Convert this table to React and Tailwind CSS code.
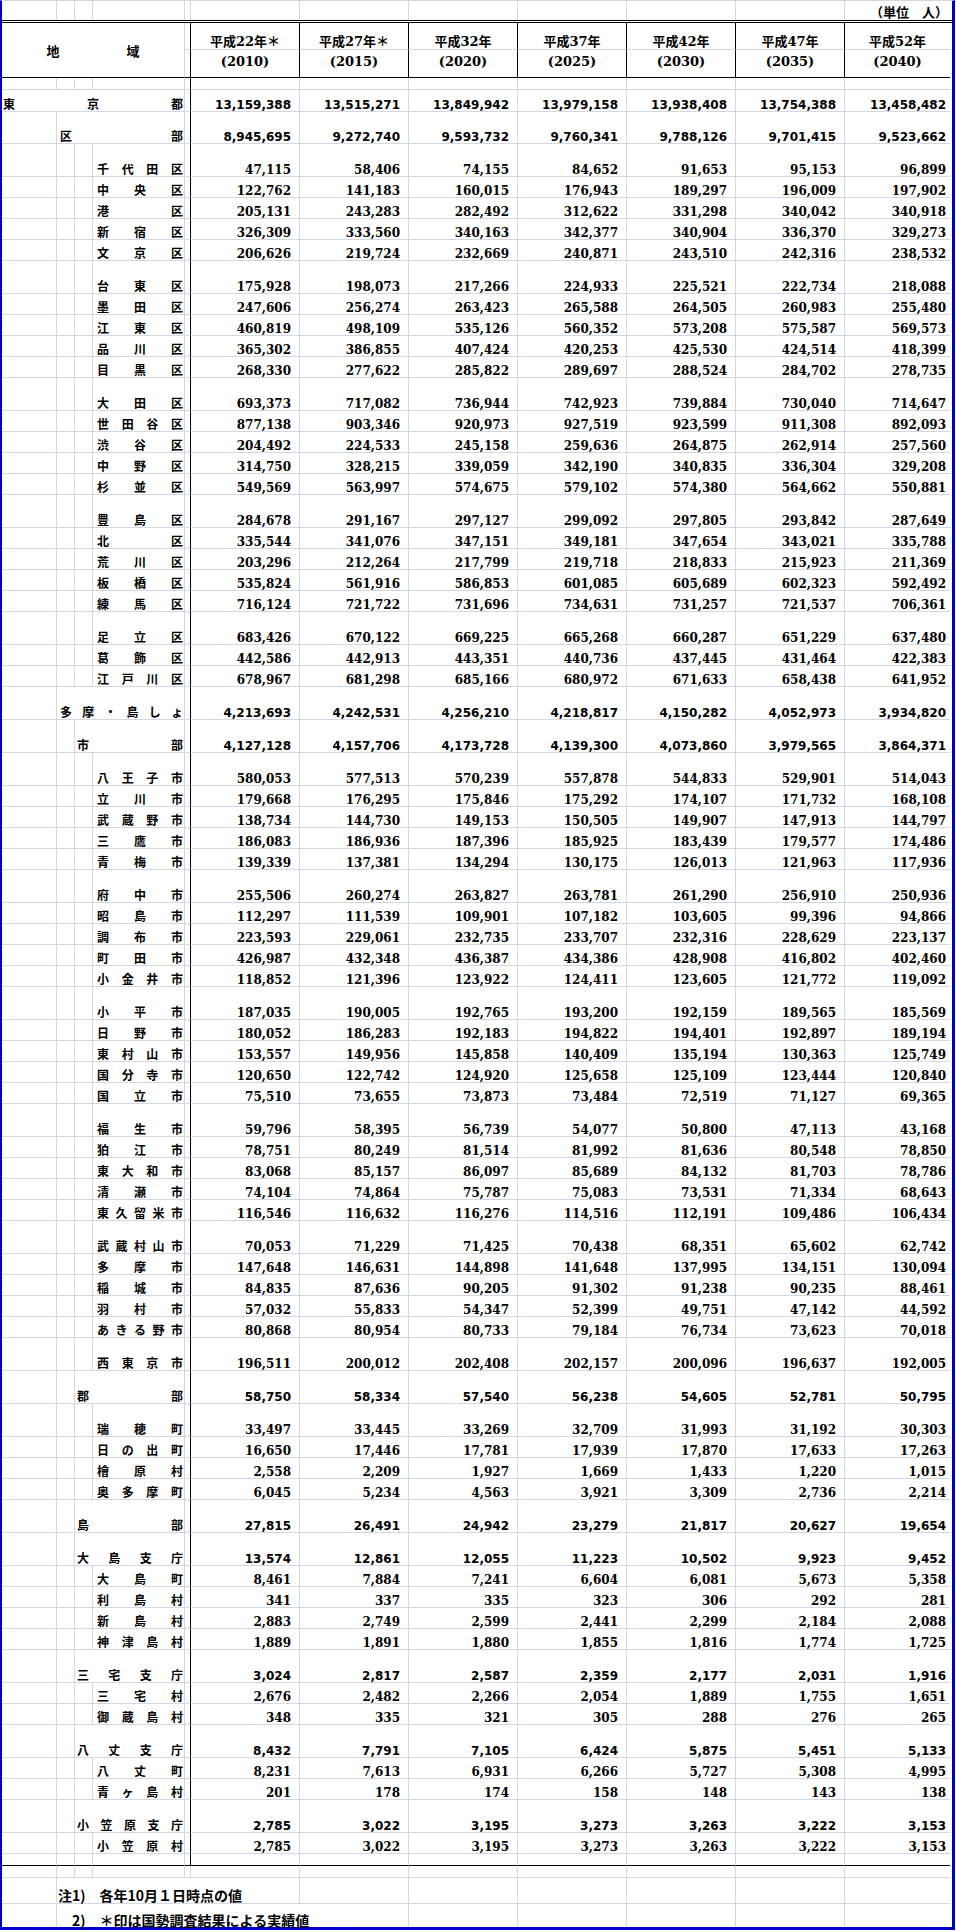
import React from 'react';

const COLS = 'grid-cols-[55px_18px_18px_92px_6px_109px_109px_109px_109px_109px_109px_105px]';
const GR = 'border-r border-r-[#d0d7e5]';
const GB = 'border-b border-b-[#d0d7e5]';
const JP = "font-['Noto_Sans_CJK_JP',sans-serif]";
const SERIF = "font-['DejaVu_Serif','Noto_Sans_CJK_JP',serif]";
const SANS = "font-['DejaVu_Sans','Noto_Sans_CJK_JP',sans-serif]";

const H = { 12: 'h-[12px]', 21: 'h-[21px]', 22: 'h-[22px]', 32: 'h-[32px]', 33: 'h-[33px]' };
const SPAN = ['col-span-4', 'col-span-3', 'col-span-2', 'col-span-1'];
const PL = ['pl-[1px]', 'pl-[3px]', 'pl-[2px]', 'pl-[4px]'];

const years = [
  ['平成22年＊', '(2010)'],
  ['平成27年＊', '(2015)'],
  ['平成32年', '(2020)'],
  ['平成37年', '(2025)'],
  ['平成42年', '(2030)'],
  ['平成47年', '(2035)'],
  ['平成52年', '(2040)'],
];

// level: 0 = 東京都, 1 = 区部/多摩, 2 = 市部/支庁, 3 = 区市町村
const data = [
  [0, '東京都', 22, 1, '13,159,388 13,515,271 13,849,942 13,979,158 13,938,408 13,754,388 13,458,482'],
  [1, '区部', 32, 1, '8,945,695 9,272,740 9,593,732 9,760,341 9,788,126 9,701,415 9,523,662'],
  [3, '千代田区', 33, 0, '47,115 58,406 74,155 84,652 91,653 95,153 96,899'],
  [3, '中央区', 21, 0, '122,762 141,183 160,015 176,943 189,297 196,009 197,902'],
  [3, '港区', 21, 0, '205,131 243,283 282,492 312,622 331,298 340,042 340,918'],
  [3, '新宿区', 21, 0, '326,309 333,560 340,163 342,377 340,904 336,370 329,273'],
  [3, '文京区', 21, 0, '206,626 219,724 232,669 240,871 243,510 242,316 238,532'],
  [3, '台東区', 33, 0, '175,928 198,073 217,266 224,933 225,521 222,734 218,088'],
  [3, '墨田区', 21, 0, '247,606 256,274 263,423 265,588 264,505 260,983 255,480'],
  [3, '江東区', 21, 0, '460,819 498,109 535,126 560,352 573,208 575,587 569,573'],
  [3, '品川区', 21, 0, '365,302 386,855 407,424 420,253 425,530 424,514 418,399'],
  [3, '目黒区', 21, 0, '268,330 277,622 285,822 289,697 288,524 284,702 278,735'],
  [3, '大田区', 33, 0, '693,373 717,082 736,944 742,923 739,884 730,040 714,647'],
  [3, '世田谷区', 21, 0, '877,138 903,346 920,973 927,519 923,599 911,308 892,093'],
  [3, '渋谷区', 21, 0, '204,492 224,533 245,158 259,636 264,875 262,914 257,560'],
  [3, '中野区', 21, 0, '314,750 328,215 339,059 342,190 340,835 336,304 329,208'],
  [3, '杉並区', 21, 0, '549,569 563,997 574,675 579,102 574,380 564,662 550,881'],
  [3, '豊島区', 33, 0, '284,678 291,167 297,127 299,092 297,805 293,842 287,649'],
  [3, '北区', 21, 0, '335,544 341,076 347,151 349,181 347,654 343,021 335,788'],
  [3, '荒川区', 21, 0, '203,296 212,264 217,799 219,718 218,833 215,923 211,369'],
  [3, '板橋区', 21, 0, '535,824 561,916 586,853 601,085 605,689 602,323 592,492'],
  [3, '練馬区', 21, 0, '716,124 721,722 731,696 734,631 731,257 721,537 706,361'],
  [3, '足立区', 33, 0, '683,426 670,122 669,225 665,268 660,287 651,229 637,480'],
  [3, '葛飾区', 21, 0, '442,586 442,913 443,351 440,736 437,445 431,464 422,383'],
  [3, '江戸川区', 21, 0, '678,967 681,298 685,166 680,972 671,633 658,438 641,952'],
  [1, '多摩・島しょ', 33, 1, '4,213,693 4,242,531 4,256,210 4,218,817 4,150,282 4,052,973 3,934,820'],
  [2, '市部', 33, 1, '4,127,128 4,157,706 4,173,728 4,139,300 4,073,860 3,979,565 3,864,371'],
  [3, '八王子市', 33, 0, '580,053 577,513 570,239 557,878 544,833 529,901 514,043'],
  [3, '立川市', 21, 0, '179,668 176,295 175,846 175,292 174,107 171,732 168,108'],
  [3, '武蔵野市', 21, 0, '138,734 144,730 149,153 150,505 149,907 147,913 144,797'],
  [3, '三鷹市', 21, 0, '186,083 186,936 187,396 185,925 183,439 179,577 174,486'],
  [3, '青梅市', 21, 0, '139,339 137,381 134,294 130,175 126,013 121,963 117,936'],
  [3, '府中市', 33, 0, '255,506 260,274 263,827 263,781 261,290 256,910 250,936'],
  [3, '昭島市', 21, 0, '112,297 111,539 109,901 107,182 103,605 99,396 94,866'],
  [3, '調布市', 21, 0, '223,593 229,061 232,735 233,707 232,316 228,629 223,137'],
  [3, '町田市', 21, 0, '426,987 432,348 436,387 434,386 428,908 416,802 402,460'],
  [3, '小金井市', 21, 0, '118,852 121,396 123,922 124,411 123,605 121,772 119,092'],
  [3, '小平市', 33, 0, '187,035 190,005 192,765 193,200 192,159 189,565 185,569'],
  [3, '日野市', 21, 0, '180,052 186,283 192,183 194,822 194,401 192,897 189,194'],
  [3, '東村山市', 21, 0, '153,557 149,956 145,858 140,409 135,194 130,363 125,749'],
  [3, '国分寺市', 21, 0, '120,650 122,742 124,920 125,658 125,109 123,444 120,840'],
  [3, '国立市', 21, 0, '75,510 73,655 73,873 73,484 72,519 71,127 69,365'],
  [3, '福生市', 33, 0, '59,796 58,395 56,739 54,077 50,800 47,113 43,168'],
  [3, '狛江市', 21, 0, '78,751 80,249 81,514 81,992 81,636 80,548 78,850'],
  [3, '東大和市', 21, 0, '83,068 85,157 86,097 85,689 84,132 81,703 78,786'],
  [3, '清瀬市', 21, 0, '74,104 74,864 75,787 75,083 73,531 71,334 68,643'],
  [3, '東久留米市', 21, 0, '116,546 116,632 116,276 114,516 112,191 109,486 106,434'],
  [3, '武蔵村山市', 33, 0, '70,053 71,229 71,425 70,438 68,351 65,602 62,742'],
  [3, '多摩市', 21, 0, '147,648 146,631 144,898 141,648 137,995 134,151 130,094'],
  [3, '稲城市', 21, 0, '84,835 87,636 90,205 91,302 91,238 90,235 88,461'],
  [3, '羽村市', 21, 0, '57,032 55,833 54,347 52,399 49,751 47,142 44,592'],
  [3, 'あきる野市', 21, 0, '80,868 80,954 80,733 79,184 76,734 73,623 70,018'],
  [3, '西東京市', 33, 0, '196,511 200,012 202,408 202,157 200,096 196,637 192,005'],
  [2, '郡部', 33, 1, '58,750 58,334 57,540 56,238 54,605 52,781 50,795'],
  [3, '瑞穂町', 33, 0, '33,497 33,445 33,269 32,709 31,993 31,192 30,303'],
  [3, '日の出町', 21, 0, '16,650 17,446 17,781 17,939 17,870 17,633 17,263'],
  [3, '檜原村', 21, 0, '2,558 2,209 1,927 1,669 1,433 1,220 1,015'],
  [3, '奥多摩町', 21, 0, '6,045 5,234 4,563 3,921 3,309 2,736 2,214'],
  [2, '島部', 33, 1, '27,815 26,491 24,942 23,279 21,817 20,627 19,654'],
  [2, '大島支庁', 33, 1, '13,574 12,861 12,055 11,223 10,502 9,923 9,452'],
  [3, '大島町', 21, 0, '8,461 7,884 7,241 6,604 6,081 5,673 5,358'],
  [3, '利島村', 21, 0, '341 337 335 323 306 292 281'],
  [3, '新島村', 21, 0, '2,883 2,749 2,599 2,441 2,299 2,184 2,088'],
  [3, '神津島村', 21, 0, '1,889 1,891 1,880 1,855 1,816 1,774 1,725'],
  [2, '三宅支庁', 33, 1, '3,024 2,817 2,587 2,359 2,177 2,031 1,916'],
  [3, '三宅村', 21, 0, '2,676 2,482 2,266 2,054 1,889 1,755 1,651'],
  [3, '御蔵島村', 21, 0, '348 335 321 305 288 276 265'],
  [2, '八丈支庁', 33, 1, '8,432 7,791 7,105 6,424 5,875 5,451 5,133'],
  [3, '八丈町', 21, 0, '8,231 7,613 6,931 6,266 5,727 5,308 4,995'],
  [3, '青ヶ島村', 21, 0, '201 178 174 158 148 143 138'],
  [2, '小笠原支庁', 33, 1, '2,785 3,022 3,195 3,273 3,263 3,222 3,153'],
  [3, '小笠原村', 21, 0, '2,785 3,022 3,195 3,273 3,263 3,222 3,153'],
];

function Blank({ n, black }) {
  // n empty cells in a row of gridlines
  return Array.from({ length: n }).map((_, i) => (
    <div key={i} className={`${GR} ${black ? 'border-b border-b-black' : GB}`} />
  ));
}

function DataRow({ row }) {
  const [lvl, name, h, total, vals] = row;
  const nums = vals.split(' ');
  return (
    <div className={`grid ${COLS} ${H[h]}`}>
      <Blank n={lvl} />
      <div
        className={`${SPAN[lvl]} ${GR} ${GB} ${PL[lvl]} pr-px pb-px flex items-end justify-between ${JP} font-bold text-[12px] leading-none`}
      >
        {Array.from(name).map((c, i) => (
          <span key={i}>{c}</span>
        ))}
      </div>
      <div className={`border-r border-r-black ${GB}`} />
      {nums.map((v, i) => (
        <div
          key={i}
          className={`flex items-end justify-end text-[12px] leading-none font-bold ${GB} ${
            i === 6 ? 'pr-[4px]' : `pr-[8px] ${GR}`
          } ${total ? SANS : SERIF}`}
        >
          {v}
        </div>
      ))}
    </div>
  );
}

function EmptyRow({ h, black, blackSep }) {
  return (
    <div className={`grid ${COLS} ${H[h]}`}>
      <Blank n={4} black={black} />
      <div
        className={`border-r ${blackSep ? 'border-r-black' : 'border-r-[#d0d7e5]'} ${
          black ? 'border-b border-b-black' : GB
        }`}
      />
      <Blank n={6} black={black} />
      <div className={black ? 'border-b border-b-black' : GB} />
    </div>
  );
}

function Header() {
  return (
    <div className={`grid ${COLS} grid-rows-[27px_28px] border-t-[3px] border-double border-black`}>
      <div
        className={`col-span-4 row-span-2 border-r border-r-[#d0d7e5] border-b border-b-black flex items-center justify-center gap-[67px] ${JP} font-bold text-[13px] leading-none`}
      >
        <span>地</span>
        <span>域</span>
      </div>
      <div className={`border-r border-r-black ${GB}`} />
      {years.map(([a], i) => (
        <div
          key={a}
          className={`${GB} ${i < 6 ? 'border-r border-r-black' : ''} flex items-end justify-center pb-px ${SERIF} font-bold text-[13px] leading-none`}
        >
          {a}
        </div>
      ))}
      <div className="border-r border-b border-black" />
      {years.map(([, b], i) => (
        <div
          key={b}
          className={`border-b border-b-black ${i < 6 ? 'border-r border-r-black' : ''} flex items-start justify-center pt-[5px] ${SERIF} font-bold text-[13px] leading-none`}
        >
          {b}
        </div>
      ))}
    </div>
  );
}

export default function App() {
  return (
    <div className="w-[956px] bg-white">
      <div className="w-[955px] border-l-2 border-r-[3px] border-b-[3px] border-[#0000cc] border-t border-t-[#d0d7e5] text-black">
        {/* unit row */}
        <div className={`grid ${COLS} h-[19px]`}>
          {Array.from({ length: 11 }).map((_, i) => (
            <div key={i} className={GR} />
          ))}
          <div className={`flex items-end justify-end pr-[2px] pb-[2px] ${JP} font-bold text-[13px] leading-none`}>
            （単位　人）
          </div>
        </div>

        <Header />
        <EmptyRow h={12} blackSep />

        {data.map((r) => (
          <DataRow key={r[1]} row={r} />
        ))}

        <EmptyRow h={12} black blackSep />
        <EmptyRow h={12} />

        {/* notes */}
        <div className={`grid ${COLS} h-[26px]`}>
          <div className={`${GR} ${GB}`} />
          <div className={`col-span-5 ${GR} ${GB} flex items-end pl-px pb-px ${JP} font-bold text-[14px] leading-none whitespace-nowrap`}>
            注1)　各年10月１日時点の値
          </div>
          <Blank n={5} />
          <div className={GB} />
        </div>
        <div className={`grid ${COLS} h-[23px]`}>
          <div className={GR} />
          <div className={`col-span-6 ${GR} flex items-end pl-[15px] ${JP} font-bold text-[14px] leading-none whitespace-nowrap`}>
            2)　＊印は国勢調査結果による実績値
          </div>
          {Array.from({ length: 4 }).map((_, i) => (
            <div key={i} className={GR} />
          ))}
          <div />
        </div>
      </div>
    </div>
  );
}
